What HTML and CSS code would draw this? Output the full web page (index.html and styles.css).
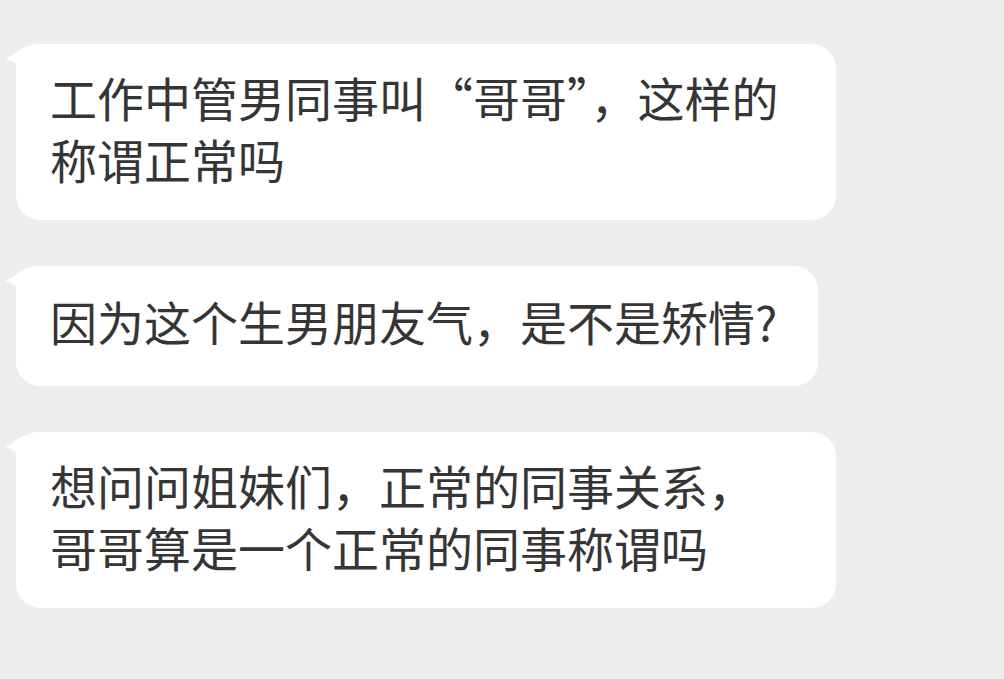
FILE: index.html
```html
<!DOCTYPE html>
<html>
<head>
	<meta charset="utf-8">
	<title>消息</title>
	<link rel="stylesheet" href="styles.css">
</head>
<body>
	<div class="chat">
		<div class="msg">
			<div class="bubble">
				<svg class="tail" width="40" height="30" viewBox="0 0 40 30"><path d="M1 15 C8 13 14 4 31 0 L40 0 L40 30 L12 30 L12 20 C8 17 4 16 1 15 Z" fill="#fff"/></svg>
				工作中管男同事叫“哥哥”，这样的称谓正常吗
			</div>
		</div>
		<div class="msg">
			<div class="bubble single">
				<svg class="tail" width="40" height="30" viewBox="0 0 40 30"><path d="M1 15 C8 13 14 4 31 0 L40 0 L40 30 L12 30 L12 20 C8 17 4 16 1 15 Z" fill="#fff"/></svg>
				因为这个生男朋友气，是不是矫情?
			</div>
		</div>
		<div class="msg">
			<div class="bubble">
				<svg class="tail" width="40" height="30" viewBox="0 0 40 30"><path d="M1 15 C8 13 14 4 31 0 L40 0 L40 30 L12 30 L12 20 C8 17 4 16 1 15 Z" fill="#fff"/></svg>
				想问问姐妹们，正常的同事关系，哥哥算是一个正常的同事称谓吗
			</div>
		</div>
	</div>
</body>
</html>
```

FILE: styles.css
```css
body {
	margin: 0;
	padding: 0;
	background-color: #ededed;
	font-family: "Noto Sans CJK SC", "Noto Sans", sans-serif;
	color: #353535;
}
.chat {
	display: flex;
	flex-direction: column;
	gap: 46px;
	padding: 44px 0 0 16px;
}
.msg {
	display: flex;
}
.bubble {
	position: relative;
	box-sizing: border-box;
	max-width: 820px;
	padding: 22px 41px 30px 34px;
	font-size: 47px;
	line-height: 62px;
	background-color: #fff;
	border-radius: 24px;
}
/* one-line bubbles sit a little taller */
.bubble.single {
	padding-top: 24px;
	padding-bottom: 34px;
}
.tail {
	position: absolute;
	top: 0;
	left: -12px;
	display: block;
}
```
